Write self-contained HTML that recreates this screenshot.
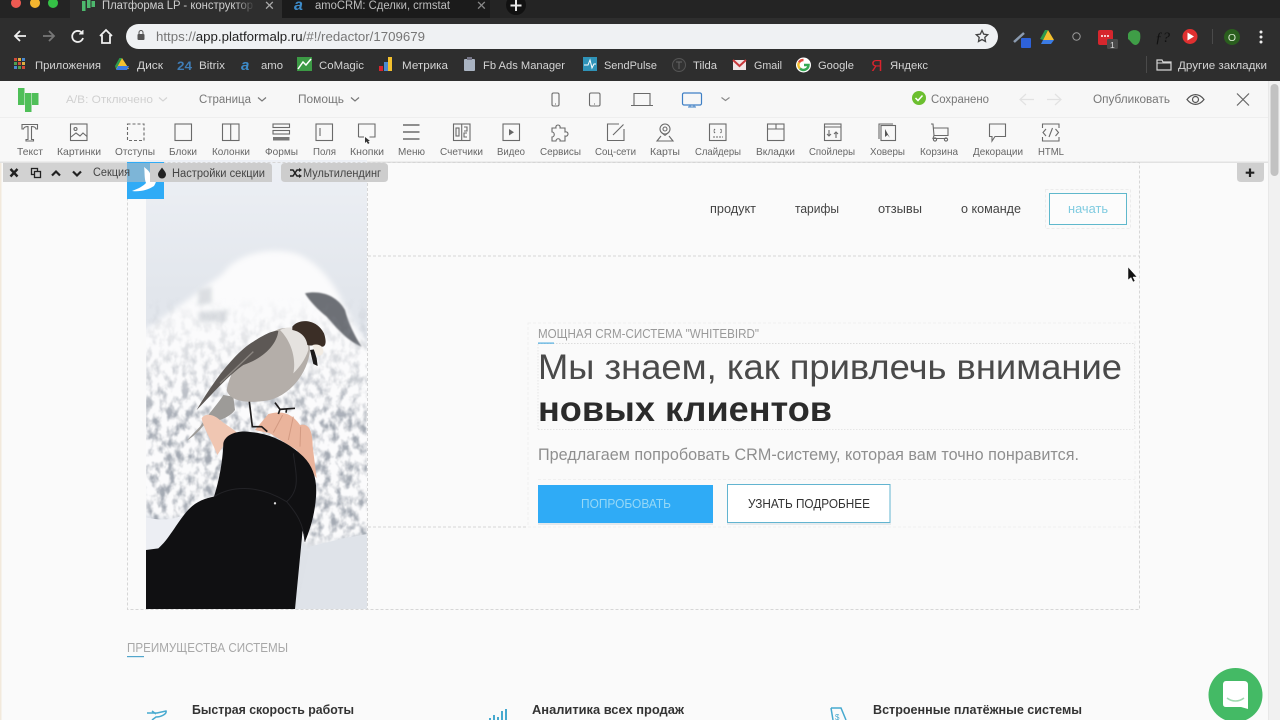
<!DOCTYPE html>
<html><head><meta charset="utf-8"><title>Платформа LP</title>
<style>
html,body{margin:0;padding:0;width:1280px;height:720px;overflow:hidden;background:#fafafa}
svg{display:block;font-family:"Liberation Sans","DejaVu Sans",sans-serif}
.lb{font-size:10.5px;fill:#666}
.bm{font-size:11px;fill:#d4d4d4}
.ic{fill:none;stroke:#6a6a6a;stroke-width:1.1}
.dash{fill:none;stroke:#d6d6d6;stroke-width:1;stroke-dasharray:3 2}
</style></head><body>
<svg width="1280" height="720" viewBox="0 0 1280 720" xmlns="http://www.w3.org/2000/svg">
<defs>
<linearGradient id="sky" x1="0" y1="0" x2="0" y2="1"><stop offset="0" stop-color="#edf0f5"/><stop offset=".3" stop-color="#e2e6ec"/><stop offset="1" stop-color="#dde1e7"/></linearGradient>
<linearGradient id="fade" x1="0" x2="1"><stop offset="0" stop-color="#2e2e2e" stop-opacity="0"/><stop offset="1" stop-color="#2e2e2e"/></linearGradient>
<linearGradient id="tm" x1="0" y1="0" x2="0" y2="1"><stop offset="0" stop-color="#000"/><stop offset=".25" stop-color="#666"/><stop offset=".5" stop-color="#fff"/><stop offset=".93" stop-color="#fff"/><stop offset="1" stop-color="#000"/></linearGradient>
<mask id="treemask" maskUnits="userSpaceOnUse" x="48" y="200" width="663" height="760"><rect x="48" y="200" width="663" height="760" fill="url(#tm)"/></mask>
<filter id="b2"><feGaussianBlur stdDeviation="2"/></filter>
<filter id="b4" x="-30%" y="-30%" width="160%" height="160%"><feGaussianBlur stdDeviation="6"/></filter>
<filter id="b6"><feGaussianBlur stdDeviation="9"/></filter>
<filter id="b1"><feGaussianBlur stdDeviation="1"/></filter>
<filter id="trees" x="0" y="0" width="100%" height="100%"><feTurbulence type="fractalNoise" baseFrequency="0.045 0.03" numOctaves="4" seed="8"/><feColorMatrix values="0 0 0 0 .3  0 0 0 0 .33  0 0 0 0 .38  3.200 0 0 0 -1.350"/><feGaussianBlur stdDeviation="1.200"/></filter>
<clipPath id="photo"><rect x="48" y="-210" width="663" height="1347"/></clipPath>
</defs>

<!-- Browser chrome -->
<rect width="1280" height="81" fill="#2e2e2e"/>
<rect width="1280" height="18" fill="#242424"/>
<path d="M70 0H282V18H70Z" fill="#2e2e2e"/>
<path d="M282 0H490V18H282Z" fill="#1b1b1b"/>
<circle cx="16" cy="3" r="5" fill="#ee5a52"/><circle cx="35" cy="3" r="5" fill="#f3b52f"/><circle cx="53" cy="3" r="5" fill="#35c146"/>
<g fill="#4db86d"><rect x="82" y="1" width="3.500" height="10"/><rect x="87" y="0" width="3.500" height="8"/><rect x="91.500" y="1" width="3.500" height="6"/></g>
<text x="102" y="9" font-size="11.500" fill="#cfcfcf" textLength="151" lengthAdjust="spacingAndGlyphs">Платформа LP - конструктор</text>
<rect x="235" y="0" width="20" height="18" fill="url(#fade)"/>
<text x="264" y="10" font-size="13" fill="#aaa">✕</text>
<text x="294" y="10" font-size="16" font-weight="bold" font-style="italic" fill="#3d8bc9">a</text>
<text x="315" y="9" font-size="11.500" fill="#bdbdbd" textLength="135" lengthAdjust="spacingAndGlyphs">amoCRM: Сделки, crmstat</text>
<text x="476" y="10" font-size="13" fill="#888">✕</text>
<circle cx="516" cy="5" r="10" fill="#111"/>
<path d="M516 0V11M510.500 5.500H521.500" stroke="#e8e8e8" stroke-width="2"/>

<g fill="none" stroke="#f0f0f0" stroke-width="1.800">
<path d="M26 36H15M20 31L15 36L20 41"/>
<path d="M43 36H54M49 31L54 36L49 41" stroke="#777"/>
<path d="M82 33A5.500 5.500 0 1 0 83 38" /><path d="M83 30V34H79" fill="#f0f0f0" stroke-width="1"/>
<path d="M100 36L106 30L112 36M102 35V43H110V35"/>
</g>
<rect x="126" y="24" width="872" height="25" rx="12.500" fill="#eff1f3"/>
<rect x="137.500" y="34" width="7" height="6" rx="1" fill="#555"/><path d="M139 34V32.500A2 2 0 0 1 143 32.500V34" fill="none" stroke="#555" stroke-width="1"/>
<text x="156" y="41" font-size="12.500" textLength="269" lengthAdjust="spacingAndGlyphs" fill="#767676">https://<tspan fill="#222">app.platformalp.ru</tspan>/#!/redactor/1709679</text>
<path d="M982 30.500L983.700 34.200L987.700 34.700L984.800 37.400L985.500 41.500L982 39.500L978.500 41.500L979.200 37.400L976.300 34.700L980.300 34.200Z" fill="none" stroke="#444" stroke-width="1.300"/>

<!-- extensions -->
<path d="M1014 42L1024 33" stroke="#8b9bb0" stroke-width="2.500"/>
<rect x="1021" y="38" width="10" height="10" rx="1" fill="#2e62d9"/>
<path d="M1048 30L1054 40H1043Z" fill="#f3c02e"/><path d="M1043 40L1048 30L1045 30L1040 39Z" fill="#2b9a4c"/><path d="M1043 40H1054L1051 44H1041Z" fill="#3b7be4"/>
<circle cx="1076.500" cy="36.500" r="3.700" fill="none" stroke="#999"/>
<rect x="1098" y="30" width="15" height="15" rx="2" fill="#d6262d"/>
<g fill="#fff"><circle cx="1102" cy="36" r="1"/><circle cx="1105" cy="36" r="1"/><circle cx="1108" cy="36" r="1"/></g>
<rect x="1107" y="39" width="11" height="10" rx="1.500" fill="#4a4a4a"/><text x="1110" y="48" font-size="8.500" fill="#ddd">1</text>
<path d="M1128 34C1130 29 1138 29 1140 33C1141 38 1140 44 1136 45C1132 45 1131 41 1128 39Z" fill="#3f9e47"/>
<text x="1155" y="42" font-size="15" font-style="italic" font-family="Liberation Serif" fill="#111">ƒ?</text>
<circle cx="1190" cy="36.500" r="7.500" fill="#e03030"/><path d="M1187.500 32.500V40.500L1194 36.500Z" fill="#fff"/>
<rect x="1212" y="29" width="1" height="15" fill="#4a4a4a"/>
<circle cx="1232" cy="37" r="8" fill="#2a5e1e"/><text x="1232" y="41" font-size="10.500" fill="#d8e8d0" text-anchor="middle">O</text>
<g fill="#eee"><circle cx="1261" cy="32" r="1.500"/><circle cx="1261" cy="37" r="1.500"/><circle cx="1261" cy="42" r="1.500"/></g>

<!-- bookmarks -->
<g>
<rect x="14" y="58" width="3" height="3" fill="#d04a3a"/><rect x="18" y="58" width="3" height="3" fill="#e0b040"/><rect x="22" y="58" width="3" height="3" fill="#4a8ad0"/>
<rect x="14" y="62" width="3" height="3" fill="#50a050"/><rect x="18" y="62" width="3" height="3" fill="#d04a3a"/><rect x="22" y="62" width="3" height="3" fill="#e0b040"/>
<rect x="14" y="66" width="3" height="3" fill="#4a8ad0"/><rect x="18" y="66" width="3" height="3" fill="#50a050"/><rect x="22" y="66" width="3" height="3" fill="#d04a3a"/>
</g>
<text class="bm" x="35" y="69" textLength="66" lengthAdjust="spacingAndGlyphs">Приложения</text>
<path d="M122 58L129 69H116Z" fill="#f3c02e"/><path d="M116 69L122 58L119.500 58L115 66Z" fill="#2b9a4c"/><path d="M118 66H129L127 70H116Z" fill="#3b7be4"/>
<text class="bm" x="137" y="69" textLength="26" lengthAdjust="spacingAndGlyphs">Диск</text>
<text x="177" y="70" font-size="12" font-weight="bold" fill="#3f7cb5" textLength="15" lengthAdjust="spacingAndGlyphs">24</text>
<text class="bm" x="199" y="69" textLength="26" lengthAdjust="spacingAndGlyphs">Bitrix</text>
<text x="241" y="70" font-size="15" font-weight="bold" font-style="italic" fill="#3d8bc9">a</text>
<text class="bm" x="261" y="69" textLength="22" lengthAdjust="spacingAndGlyphs">amo</text>
<rect x="297" y="57" width="15" height="14" fill="#3c9a45"/><path d="M298 69L303 62L306 65L311 59" fill="none" stroke="#fff" stroke-width="1.500"/>
<text class="bm" x="319" y="69" textLength="45" lengthAdjust="spacingAndGlyphs">CoMagic</text>
<rect x="379" y="66" width="4" height="5" fill="#d9232d"/><rect x="384" y="62" width="4" height="9" fill="#4a8ad0"/><rect x="388" y="57" width="4" height="14" fill="#f3c02e"/>
<text class="bm" x="402" y="69" textLength="46" lengthAdjust="spacingAndGlyphs">Метрика</text>
<rect x="464" y="59" width="11" height="12" rx="1" fill="#aab4c2"/><rect x="467" y="57" width="5" height="3" fill="#778"/>
<text class="bm" x="483" y="69" textLength="82" lengthAdjust="spacingAndGlyphs">Fb Ads Manager</text>
<rect x="583" y="57" width="14" height="14" fill="#2f93b8"/><path d="M584 65H588L590 60L592 68L594 64H596" fill="none" stroke="#fff"/>
<text class="bm" x="604" y="69" textLength="53" lengthAdjust="spacingAndGlyphs">SendPulse</text>
<circle cx="679" cy="65" r="6.500" fill="#333" stroke="#555"/><path d="M676 62H682M679 62V69" stroke="#666"/>
<text class="bm" x="693" y="69" textLength="24" lengthAdjust="spacingAndGlyphs">Tilda</text>
<rect x="733" y="60" width="13" height="10" fill="#f0e6e6"/><path d="M733 60L739.500 66L746 60" fill="none" stroke="#c8373a" stroke-width="2"/>
<text class="bm" x="754" y="69" textLength="28" lengthAdjust="spacingAndGlyphs">Gmail</text>
<circle cx="803.500" cy="65" r="7.500" fill="#fff"/><path d="M803.500 60A5 5 0 0 0 799 62.500" stroke="#e04a3a" stroke-width="2.500" fill="none"/><path d="M799 62.500A5 5 0 0 0 800 68.500" stroke="#f3c02e" stroke-width="2.500" fill="none"/><path d="M800 68.500A5 5 0 0 0 808.500 65H804" stroke="#34a853" stroke-width="2.500" fill="none"/>
<text class="bm" x="818" y="69" textLength="36" lengthAdjust="spacingAndGlyphs">Google</text>
<text x="871" y="71" font-size="16" fill="#d9232d">Я</text>
<text class="bm" x="890" y="69" textLength="38" lengthAdjust="spacingAndGlyphs">Яндекс</text>
<rect x="1146" y="56" width="1" height="17" fill="#4a4a4a"/>
<path d="M1157 60V70H1171V62H1163L1162 60Z" fill="none" stroke="#d4d4d4" stroke-width="1.200"/><path d="M1157 63H1171" stroke="#d4d4d4"/>
<text class="bm" x="1178" y="69" textLength="89" lengthAdjust="spacingAndGlyphs">Другие закладки</text>

<!-- Page background -->
<rect y="81" width="1280" height="639" fill="#fafafa"/>
<rect x="0" y="163" width="1.500" height="557" fill="#f2e9dc"/>

<!-- Editor header -->
<rect y="81" width="1268" height="36" fill="#f7f7f7"/>
<rect y="117" width="1268" height="1" fill="#eeeeee"/>
<rect y="118" width="1268" height="44" fill="#f8f8f8"/>
<g fill="#4fbf58"><rect x="18" y="88" width="6.500" height="17"/><rect x="25" y="93" width="6.500" height="19"/><rect x="32" y="93" width="6.500" height="12"/></g>
<text x="66" y="103" font-size="11" fill="#d0d0d0" textLength="87" lengthAdjust="spacingAndGlyphs">А/В: Отключено</text>
<path d="M159 97.500L163 101L167 97.500" fill="none" stroke="#d4d4d4" stroke-width="1.200"/>
<text x="199" y="103" font-size="11.500" fill="#777" textLength="52" lengthAdjust="spacingAndGlyphs">Страница</text>
<path d="M258 97.500L262 101L266 97.500" fill="none" stroke="#777" stroke-width="1.200"/>
<text x="298" y="103" font-size="11.500" fill="#777" textLength="46" lengthAdjust="spacingAndGlyphs">Помощь</text>
<path d="M351 97.500L355 101L359 97.500" fill="none" stroke="#777" stroke-width="1.200"/>

<g class="ic" stroke-width="1">
<rect x="552" y="93" width="7" height="13" rx="1.500"/><path d="M555 104H556"/>
<rect x="589.500" y="93" width="10.500" height="13" rx="1.500"/><path d="M594 104H595"/>
<path d="M634 105V93.500H650V105M631 105.500H653"/>
</g>
<rect x="682.500" y="93" width="19" height="12" rx="1.500" fill="none" stroke="#3f80c5" stroke-width="1.200"/>
<path d="M688 107H696M690 105V107M694 105V107" stroke="#3f80c5"/>
<path d="M721.500 97.500L725.500 100.500L729.500 97.500" fill="none" stroke="#888" stroke-width="1.100"/>

<circle cx="919" cy="98" r="7" fill="#6cbf2f"/><path d="M915.500 98L918 100.500L922.500 95.500" fill="none" stroke="#fff" stroke-width="1.500"/>
<text x="931" y="103" font-size="11.500" fill="#777" textLength="58" lengthAdjust="spacingAndGlyphs">Сохранено</text>
<path d="M1034 99.500H1020M1026 94L1020 99.500L1026 105" fill="none" stroke="#e2e2e2" stroke-width="1.200"/>
<path d="M1047 99.500H1061M1055 94L1061 99.500L1055 105" fill="none" stroke="#e2e2e2" stroke-width="1.200"/>
<text x="1093" y="103" font-size="11.500" fill="#777" textLength="77" lengthAdjust="spacingAndGlyphs">Опубликовать</text>
<path d="M1187 99.500C1192 93 1199 93 1204 99.500C1199 106 1192 106 1187 99.500Z" fill="none" stroke="#555" stroke-width="1.200"/><circle cx="1195.500" cy="99.500" r="3" fill="none" stroke="#555" stroke-width="1.200"/>
<path d="M1237 93.500L1249 105.500M1249 93.500L1237 105.500" stroke="#666" stroke-width="1.200"/>

<!-- Toolbar icons -->
<g class="ic">
<path d="M22 124.500H37.500V129H36C35.500 127 34 126.500 31.500 126.500V139.500H33.500V141H26V139.500H28V126.500C25.500 126.500 24 127 23.500 129H22Z"/>
<rect x="70.500" y="124" width="16.500" height="16.500"/><circle cx="75.500" cy="129" r="1.500"/><path d="M71 137L76 133L80 136L83 133L87 136.500"/>
<rect x="127.500" y="124" width="16.500" height="16.500" stroke-dasharray="3 2"/>
<rect x="175" y="124" width="16.500" height="16.500"/>
<rect x="222.500" y="124" width="16.500" height="16.500"/><path d="M230.700 124V140.500"/>
<rect x="273" y="124" width="16.500" height="3.500"/><rect x="273" y="130.500" width="16.500" height="3.500"/>
<rect x="316" y="124" width="16.500" height="16.500"/><path d="M320 128V136"/>
<path d="M358.500 137V124H375V137H369.500"/><path d="M358.500 137H364"/>
<path d="M403 125H419.500M403 132H419.500M403 139H419.500" stroke-width="1.600"/>
<rect x="453.500" y="124" width="16.500" height="16.500"/><path d="M461.700 124V140.500"/><rect x="456" y="128" width="3" height="8"/><path d="M464 127H467V131H464M467 133H464V137H467"/>
<rect x="503" y="124" width="16.500" height="16.500"/>
<path d="M552 128H556C555 124 561 124 560 128H565V132C569 131 569 137 565 136V141H560C561 138 556 138 556 141H552V137C555 137 555 132 552 132Z"/>
<path d="M619 124H607.500V140.500H624V129M613 135L623.500 124.500"/>
<circle cx="665" cy="129" r="5"/><circle cx="665" cy="129" r="2"/><path d="M665 135.500L661.500 132.500M665 135.500L668.500 132.500M661 136L657 141H673L669 136"/>
<rect x="709.500" y="124" width="16.500" height="16.500"/><path d="M715 129L713.500 131L715 133M720.500 129L722 131L720.500 133M713 137H723" stroke-dasharray="2 1"/>
<rect x="767.500" y="124" width="16.500" height="16.500"/><path d="M767.500 129H784M776 124V129"/>
<rect x="824.500" y="124" width="16.500" height="16.500"/><path d="M824.500 127H841M829 130V136M827 134L829 136L831 134M836 138V132M834 134L836 132L838 134"/>
<rect x="881" y="125.500" width="14.500" height="15"/><path d="M879 139V124H893" /><path d="M885 129L885 137L887.500 135L890 138" fill="#555" stroke="none"/>
<path d="M931 124H933L934 135.500H948V128H933.500M934 135.500L933 138.500H947"/><circle cx="935" cy="139.500" r="1.600"/><circle cx="946" cy="139.500" r="1.600"/>
<path d="M989.500 124H1005.500V136.500H995L992 141V136.500H989.500Z"/>
<path d="M1042.500 128V124H1059V128M1042.500 137V141H1059V137"/><path d="M1046 129L1043 132.500L1046 136M1055.500 129L1058.500 132.500L1055.500 136M1052.500 128L1049 137"/>
</g>
<rect x="273" y="137" width="16.500" height="3.500" fill="#777"/>
<path d="M365 137V143L366.500 141.500L368 144L369.500 143L368 141H370Z" fill="#333"/>
<path d="M509 129V135.500L514 132.200Z" fill="#666"/>

<g class="lb">
<text x="17" y="155" textLength="26" lengthAdjust="spacingAndGlyphs">Текст</text>
<text x="57" y="155" textLength="44" lengthAdjust="spacingAndGlyphs">Картинки</text>
<text x="115" y="155" textLength="40" lengthAdjust="spacingAndGlyphs">Отступы</text>
<text x="169" y="155" textLength="28" lengthAdjust="spacingAndGlyphs">Блоки</text>
<text x="212" y="155" textLength="38" lengthAdjust="spacingAndGlyphs">Колонки</text>
<text x="265" y="155" textLength="33" lengthAdjust="spacingAndGlyphs">Формы</text>
<text x="313" y="155" textLength="23" lengthAdjust="spacingAndGlyphs">Поля</text>
<text x="350" y="155" textLength="34" lengthAdjust="spacingAndGlyphs">Кнопки</text>
<text x="398" y="155" textLength="27" lengthAdjust="spacingAndGlyphs">Меню</text>
<text x="440" y="155" textLength="43" lengthAdjust="spacingAndGlyphs">Счетчики</text>
<text x="497" y="155" textLength="28" lengthAdjust="spacingAndGlyphs">Видео</text>
<text x="540" y="155" textLength="41" lengthAdjust="spacingAndGlyphs">Сервисы</text>
<text x="595" y="155" textLength="41" lengthAdjust="spacingAndGlyphs">Соц-сети</text>
<text x="650" y="155" textLength="30" lengthAdjust="spacingAndGlyphs">Карты</text>
<text x="695" y="155" textLength="46" lengthAdjust="spacingAndGlyphs">Слайдеры</text>
<text x="756" y="155" textLength="39" lengthAdjust="spacingAndGlyphs">Вкладки</text>
<text x="809" y="155" textLength="46" lengthAdjust="spacingAndGlyphs">Спойлеры</text>
<text x="870" y="155" textLength="35" lengthAdjust="spacingAndGlyphs">Ховеры</text>
<text x="920" y="155" textLength="38" lengthAdjust="spacingAndGlyphs">Корзина</text>
<text x="973" y="155" textLength="50" lengthAdjust="spacingAndGlyphs">Декорации</text>
<text x="1038" y="155" textLength="26" lengthAdjust="spacingAndGlyphs">HTML</text>
</g>
<rect y="161.500" width="1268" height="1.500" fill="#e2e2e2"/>

<!-- Photo -->
<g transform="translate(130,230) scale(.33333)">
<g clip-path="url(#photo)">
<rect x="48" y="-210" width="663" height="1347" fill="url(#sky)"/>
<!-- snowy mountain -->
<path d="M30 310C120 250 200 190 280 130C320 70 430 45 510 75C580 110 620 170 665 270L730 370V905L540 950L200 880L30 850Z" fill="#fbfbfc" filter="url(#b6)"/>
<!-- dark ridge -->
<path d="M525 190C570 180 620 195 645 240C655 280 675 320 695 350C655 335 620 295 590 260C565 240 540 215 525 190Z" fill="#55595f" opacity=".85" filter="url(#b2)"/>
<path d="M205 180L245 170V220L205 225ZM205 245L290 240V275L205 278Z" fill="#cfd3d8" opacity=".7" filter="url(#b4)"/>
<!-- forest -->
<g mask="url(#treemask)"><rect x="48" y="200" width="663" height="760" filter="url(#trees)" opacity=".85"/></g>
<!-- bottom snow -->
<path d="M48 862C90 872 130 872 170 850L130 910L85 955L48 960Z" fill="#eceef3"/>
<path d="M711 912L640 925L540 950L500 1137H711Z" fill="#dfe3e9"/>
<!-- tail -->
<path d="M170 632C190 620 205 605 222 585L250 575C275 570 300 560 315 540L310 500L280 495C265 520 240 545 210 590Z" fill="#9d9b98" filter="url(#b1)"/>
<!-- hand -->
<path d="M215 565C225 548 250 552 270 570C295 590 315 600 322 610L285 640L262 675C250 640 222 600 215 565Z" fill="#f0c6b2"/>
<path d="M375 600L415 552C440 545 480 540 510 585C540 578 548 610 548 650L560 745L500 660L420 610Z" fill="#eab49c"/>
<path d="M430 608L458 555M475 630L490 560M510 650L512 590" stroke="#d39a82" stroke-width="3" fill="none"/>
<!-- bird -->
<path d="M290 480C300 420 350 340 440 300C490 280 540 310 540 360C535 420 490 490 420 510C370 520 300 520 290 480Z" fill="#b4aea9" filter="url(#b1)"/>
<path d="M450 300C490 280 535 300 535 360C525 390 510 410 490 430C500 380 480 330 450 300Z" fill="#e5e2df" filter="url(#b1)"/>
<path d="M200 540C240 470 310 370 370 335C400 315 430 300 445 303C440 345 400 385 340 405C290 440 240 500 200 540Z" fill="#5d5955" filter="url(#b1)"/>
<path d="M270 460L370 365" stroke="#8c8782" stroke-width="4"/>
<path d="M487 290C505 265 560 265 582 310C592 340 585 352 575 350C555 340 545 350 532 345C530 325 515 305 487 300Z" fill="#3a2f28" filter="url(#b1)"/>
<path d="M540 360L550 402L563 408L560 385L552 358Z" fill="#1c1a1a"/>
<path d="M548 345C565 340 582 348 580 368C570 385 555 380 548 345Z" fill="#f2ece4"/>
<!-- legs -->
<path d="M358 515L367 590L395 590L412 605" fill="none" stroke="#1e1c1c" stroke-width="5"/>
<path d="M435 518L450 538L495 535M450 538L445 552M470 537L468 548" fill="none" stroke="#1e1c1c" stroke-width="5"/>
<!-- sleeve -->
<path d="M280 640C285 615 320 600 360 606C420 610 480 640 520 680C550 710 562 750 558 800C555 850 540 900 525 935L518 900L495 1137H48V960L85 955C115 930 140 880 170 845C195 815 225 805 252 800C265 760 278 700 280 640Z" fill="#101012"/>
<path d="M252 800C300 770 380 760 470 815M470 815C500 850 520 880 525 935M490 670C500 740 510 780 470 815" fill="none" stroke="#232327" stroke-width="3"/>
<circle cx="435" cy="820" r="3.500" fill="#ddd"/>
</g>
</g>
<rect x="127" y="162" width="19" height="447" fill="#fafafa"/>

<!-- Dashed guides -->
<rect class="dash" x="127.500" y="162.500" width="1012" height="447"/>
<path class="dash" d="M367.500 163V609M368 256H1140M368 527H1140"/>
<rect x="1045.500" y="189.500" width="85" height="39" fill="none" stroke="#ececec" stroke-dasharray="3 2"/>
<rect x="528" y="323" width="607" height="204" fill="none" stroke="#f0f0f0" stroke-dasharray="3 2"/>
<path d="M538 343.500H1135" stroke="#dcdcdc" stroke-dasharray="1.500 1.500"/>
<path d="M538 429.500H1135M1134.500 344V429M538 344V429" stroke="#e6e6e6" stroke-dasharray="1.500 1.500" fill="none"/>
<path d="M538 479.500H1135" stroke="#f0f0f0" stroke-dasharray="3 2"/>

<!-- Site nav -->
<g font-size="12.500" fill="#444">
<text x="710" y="213" textLength="46" lengthAdjust="spacingAndGlyphs">продукт</text>
<text x="795" y="213" textLength="44" lengthAdjust="spacingAndGlyphs">тарифы</text>
<text x="878" y="213" textLength="44" lengthAdjust="spacingAndGlyphs">отзывы</text>
<text x="961" y="213" textLength="60" lengthAdjust="spacingAndGlyphs">о команде</text>
</g>
<rect x="1049.500" y="193.500" width="77" height="31" fill="#fcfcfc" stroke="#5fb8cc"/>
<text x="1068" y="213" font-size="12.500" fill="#7fcbe0" textLength="40" lengthAdjust="spacingAndGlyphs">начать</text>

<!-- Hero -->
<text x="538" y="338" font-size="12.500" fill="#999" textLength="221" lengthAdjust="spacingAndGlyphs">МОЩНАЯ CRM-СИСТЕМА "WHITEBIRD"</text>
<rect x="538" y="342.500" width="16" height="1.200" fill="#52aee0"/>
<text x="538" y="379" font-size="35" fill="#4a4a4a" textLength="584" lengthAdjust="spacingAndGlyphs">Мы знаем, как привлечь внимание</text>
<text x="538" y="421" font-size="35" font-weight="bold" fill="#2b2b2b" textLength="294" lengthAdjust="spacingAndGlyphs">новых клиентов</text>
<text x="538" y="460" font-size="16.500" fill="#8f8f8f" textLength="541" lengthAdjust="spacingAndGlyphs">Предлагаем попробовать CRM-систему, которая вам точно понравится.</text>
<rect x="538" y="485" width="175" height="38" fill="#2fabf6"/>
<rect x="538" y="523" width="175" height="2" fill="#e3e8ec"/>
<text x="581" y="508" font-size="12.500" fill="#96d8f6" textLength="90" lengthAdjust="spacingAndGlyphs">ПОПРОБОВАТЬ</text>
<rect x="727.500" y="484.500" width="162.500" height="38" fill="#fff" stroke="#62b4d0"/>
<rect x="727" y="523" width="164" height="2" fill="#e6ebee"/>
<text x="748" y="508" font-size="12.500" fill="#333" textLength="122" lengthAdjust="spacingAndGlyphs">УЗНАТЬ ПОДРОБНЕЕ</text>

<!-- Advantages -->
<text x="127" y="652" font-size="12.500" fill="#a8a8a8" textLength="161" lengthAdjust="spacingAndGlyphs">ПРЕИМУЩЕСТВА СИСТЕМЫ</text>
<rect x="127" y="656" width="17" height="1.200" fill="#52a6cc"/>
<path d="M147 713H157L166 711C167 714 161 717 156 717L152 720M152 711L156 714" fill="none" stroke="#46a9cf" stroke-width="1.500"/>
<text x="192" y="714" font-size="13" font-weight="bold" fill="#333" textLength="162" lengthAdjust="spacingAndGlyphs">Быстрая скорость работы</text>
<path d="M490 718V720M494 715V720M498 717V720M502 711V720M506 709V720" stroke="#46a9cf" stroke-width="2"/>
<text x="532" y="714" font-size="13" font-weight="bold" fill="#333" textLength="152" lengthAdjust="spacingAndGlyphs">Аналитика всех продаж</text>
<path d="M831 708H841L846 720M831 708L833 720" fill="none" stroke="#46a9cf" stroke-width="1.500"/>
<text x="835" y="720" font-size="8" fill="#46a9cf">$</text>
<text x="873" y="714" font-size="13" font-weight="bold" fill="#333" textLength="209" lengthAdjust="spacingAndGlyphs">Встроенные платёжные системы</text>

<!-- Section toolbar -->
<rect x="3" y="163" width="124" height="19" fill="#d2d2d2"/>
<rect x="127" y="162" width="37" height="37" fill="#2fabf6"/>
<rect x="127" y="163" width="37" height="19" fill="#bdbdbd" opacity=".55"/>
<path d="M132 191C140 188 143 186 146 183C144 178 145 172 144 167C148 170 150 172 151 176C154 172 157 170 159 169C158 175 157 181 154 186C148 190 140 192 132 191Z" fill="#fff"/>
<path d="M150 163H268Q272 163 272 167V182H150Z" fill="#cdcdcd"/>
<path d="M285 163H384Q388 163 388 167V178Q388 182 384 182H285Q281 182 281 178V167Q281 163 285 163Z" fill="#cdcdcd"/>
<path d="M10.500 169L17.500 176.500M17.500 169L10.500 176.500" stroke="#222" stroke-width="2.400"/>
<rect x="31.500" y="168.500" width="6" height="6" fill="none" stroke="#222" stroke-width="1.300"/><rect x="34.500" y="171.500" width="6" height="6" fill="#cdcdcd" stroke="#222" stroke-width="1.300"/>
<path d="M52 175.500L56 171.500L60 175.500" fill="none" stroke="#222" stroke-width="2.200"/>
<path d="M73 171.500L77 175.500L81 171.500" fill="none" stroke="#222" stroke-width="2.200"/>
<text x="93" y="176" font-size="11.500" fill="#444" textLength="37" lengthAdjust="spacingAndGlyphs">Секция</text>
<path d="M162 167.500C163.500 170 166 172 166 174.500A4 4 0 0 1 158 174.500C158 172 160.500 170 162 167.500Z" fill="#222"/>
<text x="172" y="177" font-size="11.500" fill="#444" textLength="93" lengthAdjust="spacingAndGlyphs">Настройки секции</text>
<path d="M290 170H293L297 176H300M290 176H293L297 170H300" fill="none" stroke="#222" stroke-width="1.500"/>
<path d="M299 168L302 170L299 172ZM299 174L302 176L299 178Z" fill="#222"/>
<text x="303" y="177" font-size="11.500" fill="#444" textLength="78" lengthAdjust="spacingAndGlyphs">Мультилендинг</text>
<path d="M1237 163H1264V178Q1264 182 1260 182H1241Q1237 182 1237 178Z" fill="#cfcfcf"/>
<path d="M1250 168.500V177M1245.700 172.700H1254.300" stroke="#222" stroke-width="2.200"/>

<!-- Cursor -->
<path d="M1128 267V280L1131 277.500L1133 282L1135 281L1133 277H1137Z" fill="#111" stroke="#fff" stroke-width=".5"/>

<!-- Scrollbar -->
<rect x="1268" y="81" width="12" height="639" fill="#f1f1f1"/>
<rect x="1268" y="81" width="1" height="639" fill="#e8e8e8"/>
<rect x="1270.500" y="84" width="8" height="92" rx="4" fill="#c2c2c2"/>

<!-- Chat bubble -->
<circle cx="1235.500" cy="695" r="27" fill="#44ba65"/>
<path d="M1226 681H1244Q1248 681 1248 685V709L1241 707H1226Q1223 707 1223 704V685Q1223 681 1226 681Z" fill="#fff"/>
<path d="M1227 698C1232 702 1239 702 1244 698" fill="none" stroke="#9fdab0" stroke-width="1.500"/>
</svg>
</body></html>
